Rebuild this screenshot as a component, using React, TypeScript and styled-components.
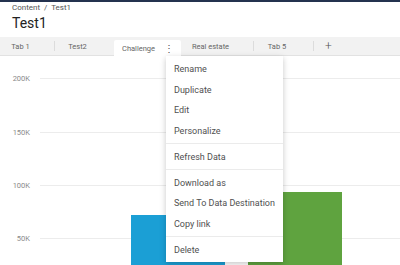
import React from "react";
import styled, { createGlobalStyle } from "styled-components";

const GlobalStyle = createGlobalStyle`
  html, body {
    margin: 0;
    padding: 0;
    background: #fff;
    font-family: Roboto, "Liberation Sans", sans-serif;
    overflow: hidden;
  }
`;

const tabs = [
	{ label: "Tab 1", width: 55 },
	{ label: "Test2", width: 59 },
	{ label: "Challenge", width: 67, active: true },
	{ label: "Real estate", width: 73 },
	{ label: "Tab 5", width: 60 },
];

const menuGroups = [
	["Rename", "Duplicate", "Edit", "Personalize"],
	["Refresh Data"],
	["Download as", "Send To Data Destination", "Copy link"],
	["Delete"],
];

const gridLines = [
	{ label: "200K", y: 22 },
	{ label: "150K", y: 76 },
	{ label: "100K", y: 129 },
	{ label: "50K", y: 182 },
];

export default function App() {
	return (
		<Page>
			<GlobalStyle />
			<TopLine />
			<Header>
				<Breadcrumb>Content&nbsp; /&nbsp; Test1</Breadcrumb>
				<Title>Test1</Title>
			</Header>
			<TabBar>
				{tabs.map((tab, i) => (
					<Tab
						key={tab.label}
						$width={tab.width}
						$active={!!tab.active}
						$divider={!tab.active && !tabs[i + 1]?.active}
					>
						{tab.label}
						{tab.active && <Dots>⋮</Dots>}
					</Tab>
				))}
				<AddTab>+</AddTab>
			</TabBar>
			<ChartArea>
				<svg width="400" height="209" viewBox="0 0 400 209" style={{ display: "block" }}>
					{gridLines.map((g) => (
						<g key={g.label}>
							<line x1="40" x2="400" y1={g.y + 0.5} y2={g.y + 0.5} stroke="#ececec" strokeWidth="1" />
							<text
								x="30"
								y={g.y + 3}
								textAnchor="end"
								fontSize="7.5"
								fill="#8a8a8a"
								fontFamily="Roboto, sans-serif"
							>
								{g.label}
							</text>
						</g>
					))}
					<rect x="131" y="159" width="94" height="60" fill="#1b9fd5" />
					<rect x="248" y="136" width="94" height="80" fill="#5fa33f" />
				</svg>
				<Menu>
					{menuGroups.map((group, gi) => (
						<React.Fragment key={gi}>
							{gi > 0 && <Divider />}
							{group.map((item) => (
								<MenuItem key={item}>{item}</MenuItem>
							))}
						</React.Fragment>
					))}
				</Menu>
			</ChartArea>
		</Page>
	);
}

const Page = styled.div`
    width: 400px;
    height: 265px;
    display: flex;
    flex-direction: column;
    overflow: hidden;
`;

const TopLine = styled.div`
    flex-shrink: 0;
    height: 2px;
    background: #24324f;
`;

const Header = styled.div`
    flex-shrink: 0;
    display: flex;
    flex-direction: column;
    padding: 0 12px;
    height: 35px;
`;

const Breadcrumb = styled.div`
    margin-top: 1px;
    font-size: 8px;
    line-height: 10px;
    color: #555;
`;

const Title = styled.h1`
    margin: 1px 0 0;
    font-size: 14px;
    font-weight: 400;
    line-height: 18px;
    color: #222;
`;

const TabBar = styled.div`
    flex-shrink: 0;
    display: flex;
    align-items: flex-end;
    height: 18px;
    background: #f2f2f2;
    border-bottom: 1px solid #e2e2e2;
`;

const Tab = styled.div<{ $width: number; $active: boolean; $divider: boolean }>`
    position: relative;
    width: ${(p) => p.$width}px;
    height: ${(p) => (p.$active ? "16px" : "18px")};
    margin-bottom: ${(p) => (p.$active ? "-1px" : "0")};
    padding: ${(p) => (p.$active ? "0 7px 0 8px" : "0 14px 0 0")};
    box-sizing: border-box;
    display: flex;
    align-items: center;
    justify-content: ${(p) => (p.$active ? "space-between" : "center")};
    font-size: 7.5px;
    color: #666;
    background: ${(p) => (p.$active ? "#fff" : "transparent")};
    border-radius: ${(p) => (p.$active ? "2px 2px 0 0" : "0")};

    &::after {
        content: "";
        display: ${(p) => (p.$divider ? "block" : "none")};
        position: absolute;
        right: 0;
        top: 4px;
        width: 1px;
        height: 10px;
        background: #dcdcdc;
    }
`;

const Dots = styled.span`
    font-size: 10px;
    color: #555;
`;

const AddTab = styled.div`
    height: 18px;
    padding-left: 11px;
    display: flex;
    align-items: center;
    font-size: 12px;
    font-weight: 300;
    color: #555;
`;

const ChartArea = styled.div`
    position: relative;
    flex: 1;
    min-height: 0;
`;

const Menu = styled.div`
    position: absolute;
    top: 0;
    left: 166px;
    width: 117px;
    padding: 3px 0 2px;
    background: #fff;
    box-shadow: 0 2px 6px rgba(0, 0, 0, 0.22);
`;

const MenuItem = styled.div`
    height: 20.5px;
    padding-left: 8px;
    display: flex;
    align-items: center;
    font-size: 9px;
    color: #505050;
    white-space: nowrap;
`;

const Divider = styled.div`
    height: 1px;
    margin: 2.25px 0;
    background: #ebebeb;
`;
